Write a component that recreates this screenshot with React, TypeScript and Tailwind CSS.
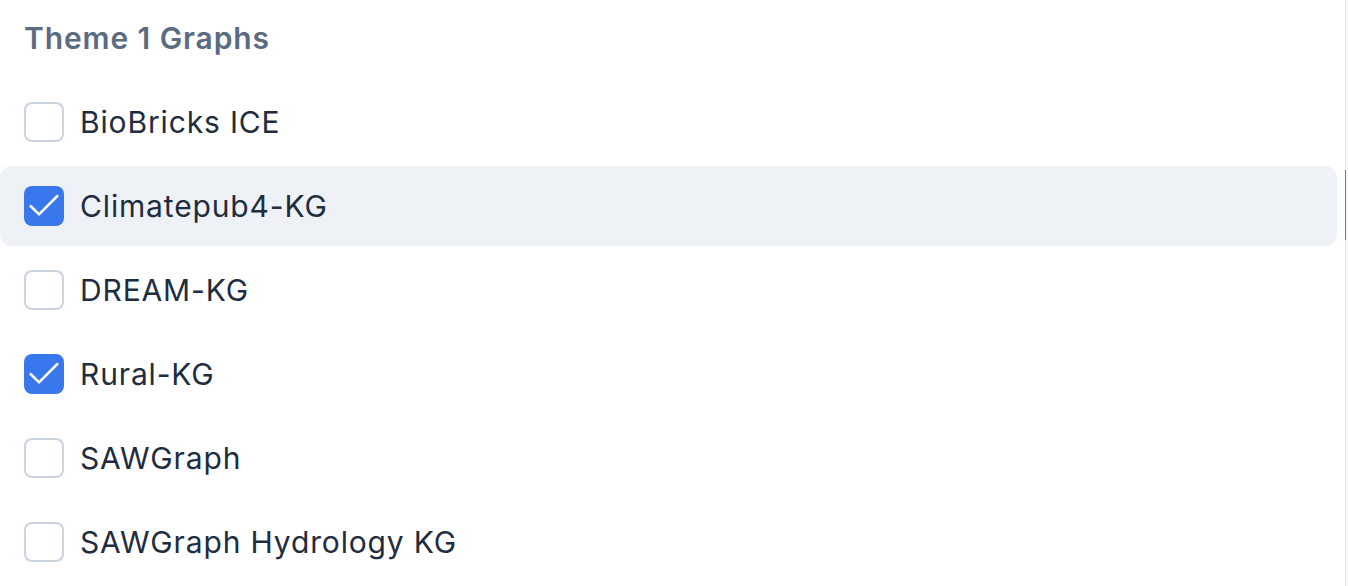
import { useState } from "react";

const GRAPHS = [
  { id: "biobricks", label: "BioBricks ICE", checked: false },
  { id: "climatepub", label: "Climatepub4-KG", checked: true },
  { id: "dream", label: "DREAM-KG", checked: false },
  { id: "rural", label: "Rural-KG", checked: true },
  { id: "sawgraph", label: "SAWGraph", checked: false },
  { id: "sawgraph-hydro", label: "SAWGraph Hydrology KG", checked: false },
];

function Checkbox({ checked }: { checked: boolean }) {
  if (checked) {
    return (
      <span className="flex size-10 shrink-0 items-center justify-center rounded-lg bg-[#3977ec]">
        <svg
          viewBox="0 0 24 24"
          width={40}
          height={40}
          fill="none"
          stroke="white"
          strokeWidth={1.5}
          strokeLinecap="round"
          strokeLinejoin="round"
        >
          <path d="M20 6 9 17l-5-5" />
        </svg>
      </span>
    );
  }
  return (
    <span className="size-10 shrink-0 rounded-lg border-2 border-[#cad3df] bg-white" />
  );
}

export default function App() {
  const [items, setItems] = useState(GRAPHS);

  const toggle = (id: string) =>
    setItems((prev) =>
      prev.map((it) => (it.id === id ? { ...it, checked: !it.checked } : it)),
    );

  return (
    <div className="flex h-[586px] w-full overflow-hidden bg-white font-['Inter',sans-serif]">
      {/* Filter panel */}
      <div className="flex-1 pr-2 pt-4">
        <h2 className="px-6 text-[30px] font-semibold leading-[44px] tracking-[0.9px] text-[#5b6b81]">
          Theme 1 Graphs
        </h2>
        <div className="mt-[22px] flex flex-col gap-1">
          {items.map((it) => (
            <button
              key={it.id}
              onClick={() => toggle(it.id)}
              className={
                it.id === "climatepub"
                  ? "flex h-20 items-center gap-4 rounded-xl bg-[#eef2f7] px-6 text-left"
                  : "flex h-20 items-center gap-4 rounded-xl px-6 text-left"
              }
            >
              <Checkbox checked={it.checked} />
              <span className="text-[30px] leading-none tracking-[0.85px] text-[#212c3f]">
                {it.label}
              </span>
            </button>
          ))}
        </div>
      </div>

      {/* Edge of neighbouring panel */}
      <div className="flex w-[3px] shrink-0">
        <div className="w-px bg-[#e2e6ec]">
          <div className="mt-[170px] h-[70px] bg-[#4a80e0]" />
        </div>
        <div className="flex-1 bg-[#f8f9fb]" />
      </div>
    </div>
  );
}
